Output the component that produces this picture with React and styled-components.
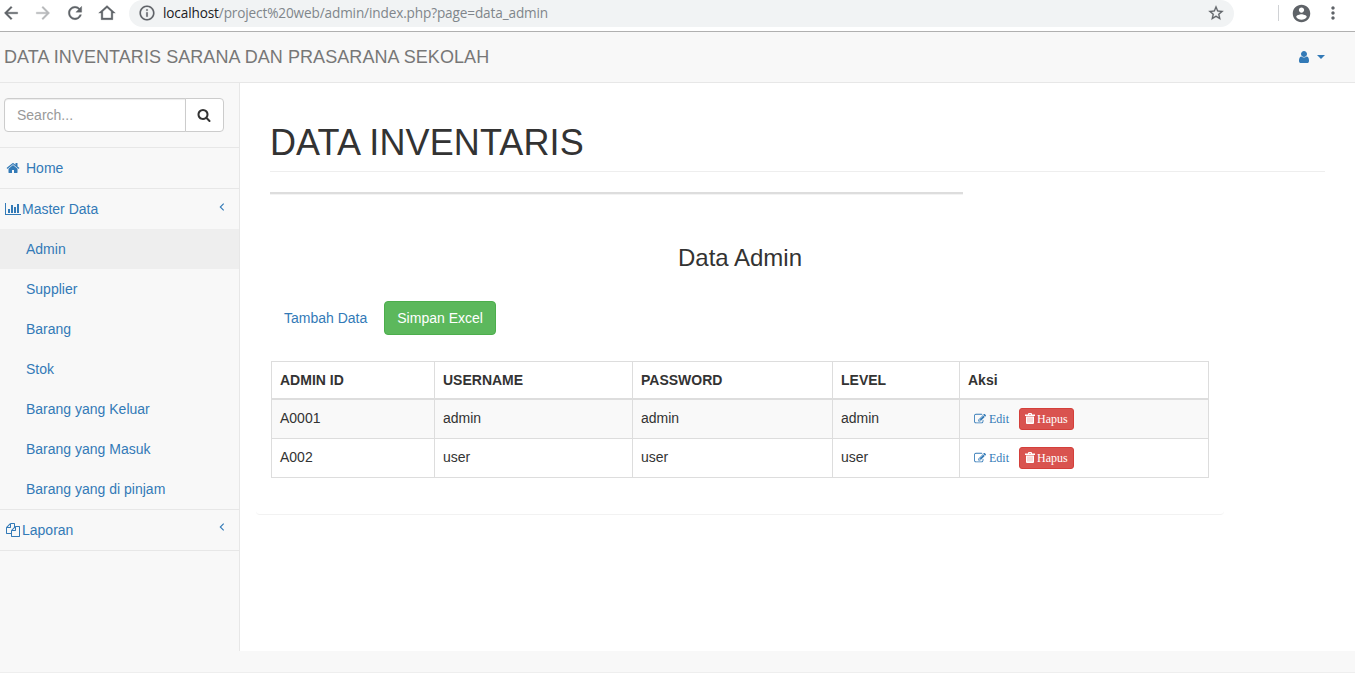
import React from "react";
import styled, { createGlobalStyle } from "styled-components";

const GlobalStyle = createGlobalStyle`
  * { box-sizing: border-box; }
  body {
    margin: 0;
    background: #f8f8f8;
    color: #333;
    font: 14px/20px "Liberation Sans", Arial, sans-serif;
    overflow: hidden;
  }
  a { color: #337ab7; text-decoration: none; }
`;

const Page = styled.div`
  height: 673px;
  display: flex;
  flex-direction: column;
  border-bottom: 1px solid #eee;
`;

/* Browser toolbar */
const Toolbar = styled.div`
  flex: none;
  height: 32px;
  padding-bottom: 4px;
  display: flex;
  background: #fff;
  border-bottom: 1px solid #b0b0b0;
`;
const NavButtons = styled.div`
  width: 129px;
  height: 26px;
  display: flex;
  align-items: center;
  gap: 12px;
  padding-left: 1px;
  color: #5f6368;
`;
const Address = styled.div`
  width: 1105px;
  height: 27px;
  padding: 0 9px 1px;
  display: flex;
  align-items: center;
  border-radius: 14px;
  background: #f1f3f4;
  color: #5f6368;
`;
const Url = styled.span`
  flex: 1;
  margin-left: 7px;
  font: 13.6px/20px "Open Sans", "Noto Sans", sans-serif;
  letter-spacing: -0.13px;
  color: #80868b;
  white-space: nowrap;
`;
const Host = styled.span`
  color: #202124;
`;
const BrowserActions = styled.div`
  flex: 1;
  height: 26px;
  display: flex;
  align-items: center;
  color: #5f6368;
`;
const Divider = styled.span`
  width: 1px;
  height: 16px;
  margin: 0 12px 0 44px;
  background: #d0d2d5;
`;
const MenuButton = styled.span`
  display: flex;
  margin-left: 11px;
`;

/* Application header */
const Header = styled.header`
  flex: none;
  height: 51px;
  padding: 0 30px 1px 4px;
  display: flex;
  align-items: center;
  justify-content: space-between;
  border-bottom: 1px solid #e7e7e7;
`;
const Brand = styled.span`
  font-size: 18px;
  letter-spacing: 0.07px;
  color: #777;
  white-space: nowrap;
`;
const UserMenu = styled.a`
  display: flex;
  align-items: center;
  gap: 5px;
`;
const Caret = styled.span`
  border: 4px solid transparent;
  border-top-color: #337ab7;
  border-bottom: 0;
`;

const Body = styled.div`
  flex: none;
  height: 568px;
  display: flex;
`;

/* Sidebar */
const Sidebar = styled.nav`
  width: 240px;
  border-right: 1px solid #e7e7e7;
`;
const SearchBox = styled.div`
  height: 65px;
  padding: 15px 15px 15px 4px;
  display: flex;
  border-bottom: 1px solid #e7e7e7;
`;
const SearchField = styled.input`
  width: 182px;
  height: 34px;
  padding: 0 12px;
  border: 1px solid #ccc;
  border-radius: 4px 0 0 4px;
  background: #fff;
  box-shadow: inset 0 1px 1px rgba(0, 0, 0, 0.075);
  font: inherit;
  outline: 0;
  &::placeholder { color: #999; opacity: 1; }
`;
const SearchButton = styled.button`
  width: 39px;
  height: 34px;
  margin-left: -1px;
  padding: 0 1px 0 0;
  display: grid;
  place-items: center;
  border: 1px solid #ccc;
  border-radius: 0 4px 4px 0;
  background: #fff;
  color: #333;
`;
const NavItem = styled.a`
  height: 41px;
  padding: 0 14px 1px ${(p) => p.$inset}px;
  display: flex;
  align-items: center;
  gap: ${(p) => p.$gap}px;
  border-bottom: ${(p) => (p.$open ? "0" : "1px solid #e7e7e7")};
  ${(p) => p.$open && "height: 40px; padding-bottom: 0;"}
`;
const NavLabel = styled.span`
  flex: 1;
`;
const ArrowSlot = styled.span`
  display: flex;
  padding-bottom: 5px;
`;
const SubMenu = styled.div`
  border-bottom: 1px solid #e7e7e7;
`;
const SubItem = styled.a`
  display: block;
  height: 40px;
  padding: 10px 0 0 26px;
  background: ${(p) => (p.$active ? "#eee" : "transparent")};
`;

/* Main content */
const Main = styled.main`
  flex: 1;
  padding: 40px 30px 0 16px;
  background: #fff;
`;
const PageTitle = styled.h1`
  height: 49px;
  margin: 0 0 0 14px;
  border-bottom: 1px solid #eee;
  font-size: 36px;
  line-height: 40px;
  letter-spacing: 0.12px;
  font-weight: 400;
`;
const Rule = styled.hr`
  width: 693px;
  height: 3px;
  margin: 20px 0 0 14px;
  border: 0;
  border-top: 2px solid #ddd;
  background: #f3f3f3;
`;
const Panel = styled.section`
  width: 968px;
  height: 320px;
  padding: 50px 15px 0;
  border-radius: 4px;
  border-bottom: 1px solid #f2f2f2;
`;
const SectionTitle = styled.h3`
  margin: 0;
  font-size: 24px;
  line-height: 26px;
  font-weight: 400;
  text-align: center;
`;
const Actions = styled.div`
  display: flex;
  gap: 4px;
  margin: 30px 0 26px;
`;
const Button = styled.a`
  height: 34px;
  padding: 6px 12px;
  border: 1px solid ${(p) => (p.$primary ? "#4cae4c" : "transparent")};
  border-radius: 4px;
  background: ${(p) => (p.$primary ? "#5cb85c" : "transparent")};
  color: ${(p) => (p.$primary ? "#fff" : "#337ab7")};
`;
const Table = styled.table`
  width: 938px;
  table-layout: fixed;
  border-collapse: separate;
  border-spacing: 0;
  border: solid #ddd;
  border-width: 1px 0 0 1px;
`;
const HeadCell = styled.th`
  width: ${(p) => p.$width}px;
  height: 38px;
  padding: 0 8px;
  border: solid #ddd;
  border-width: 0 1px 2px 0;
  text-align: left;
`;
const Row = styled.tr`
  background: ${(p) => (p.$striped ? "#f9f9f9" : "#fff")};
`;
const Cell = styled.td`
  height: 39px;
  padding: 8px 8px 10px;
  border: solid #ddd;
  border-width: 0 1px 1px 0;
`;
const RowActions = styled.div`
  height: 20px;
  display: flex;
  align-items: flex-start;
  gap: 4px;
`;
const SmallButton = styled.a`
  height: 22px;
  padding: 0 5px;
  display: flex;
  align-items: center;
  gap: ${(p) => (p.$danger ? 2 : 3)}px;
  border: 1px solid ${(p) => (p.$danger ? "#d43f3a" : "transparent")};
  border-radius: 3px;
  background: ${(p) => (p.$danger ? "#d9534f" : "transparent")};
  color: ${(p) => (p.$danger ? "#fff" : "#337ab7")};
  font: 12px/18px "Liberation Serif", "Times New Roman", serif;
`;

const Glyph = styled.svg`
  flex: none;
  display: block;
  fill: currentColor;
`;

const PATHS = {
  user: "M1536 1399q0 109-62.5 187t-150.5 78h-854q-88 0-150.5-78t-62.5-187q0-85 8.5-160.5t31.5-152 58.5-131 94-89 134.5-34.5q131 128 313 128t313-128q76 0 134.5 34.5t94 89 58.5 131 31.5 152 8.5 160.5zm-256-887q0 159-112.5 271.5t-271.5 112.5-271.5-112.5-112.5-271.5 112.5-271.5 271.5-112.5 271.5 112.5 112.5 271.5z",
  search: "M1216 832q0-185-131.5-316.5t-316.5-131.5-316.5 131.5-131.5 316.5 131.5 316.5 316.5 131.5 316.5-131.5 131.5-316.5zm512 832q0 52-38 90t-90 38q-54 0-90-38l-343-342q-179 124-399 124-143 0-273.5-55.5t-225-150-150-225-55.5-273.5 55.5-273.5 150-225 225-150 273.5-55.5 273.5 55.5 225 150 150 225 55.5 273.5q0 220-124 399l343 343q37 37 37 90z",
  home: "M1472 992v480q0 26-19 45t-45 19h-384v-384h-256v384h-384q-26 0-45-19t-19-45v-480q0-1 .5-3t.5-3l575-474 575 474q1 2 1 6zm223-69l-62 74q-8 9-21 11h-3q-13 0-21-7l-692-577-692 577q-12 8-24 7-13-2-21-11l-62-74q-8-10-7-23.5t11-21.5l719-599q32-26 76-26t76 26l244 204v-195q0-14 9-23t23-9h192q14 0 23 9t9 23v408l219 182q10 8 11 21.5t-7 23.5z",
  chart: "M640 896v512h-256v-512h256zm384-512v1024h-256v-1024h256zm1024 1152v128h-2048v-1536h128v1408h1920zm-640-896v768h-256v-768h256zm384-384v1152h-256v-1152h256z",
  files: "M1696 384q40 0 68 28t28 68v1216q0 40-28 68t-68 28h-960q-40 0-68-28t-28-68v-288h-544q-40 0-68-28t-28-68v-672q0-40 20-88t48-76l408-408q28-28 76-48t88-20h416q40 0 68 28t28 68v328q68-40 128-40h416zm-544 213l-299 299h299v-299zm-640-384l-299 299h299v-299zm196 647l316-316v-416h-384v416q0 40-28 68t-68 28h-416v640h512v-256q0-40 20-88t48-76zm956 804v-1152h-384v416q0 40-28 68t-68 28h-416v640h896z",
  edit: "M888 1184l116-116-152-152-116 116v56h96v96h56zm440-720q-16-16-33 1l-350 350q-17 17-1 33t33-1l350-350q17-17 1-33zm80 594v190q0 119-84.5 203.5t-203.5 84.5h-832q-119 0-203.5-84.5t-84.5-203.5v-832q0-119 84.5-203.5t203.5-84.5h832q63 0 117 25 15 7 18 23 3 17-9 29l-49 49q-14 14-32 8-23-6-45-6h-832q-66 0-113 47t-47 113v832q0 66 47 113t113 47h832q66 0 113-47t47-113v-126q0-13 9-22l64-64q15-15 35-7t20 29zm-96-738l288 288-672 672h-288v-288zm444 132l-92 92-288-288 92-92q28-28 68-28t68 28l152 152q28 28 28 68t-28 68z",
};

const Icon = ({ name, width = 14, height = 14, box = "0 0 1792 1792" }) => (
  <Glyph width={width} height={height} viewBox={box}>
    <path d={PATHS[name]} />
  </Glyph>
);

const TrashIcon = () => (
  <Glyph width="10" height="12" viewBox="0 0 10 12">
    <path d="M0 1.6h3V1q0-1 1-1h2q1 0 1 1v.6h3V3H0zM4 1v.6h2V1zM1 3.5h8V10q0 1-1 1H2q-1 0-1-1z" />
    <path d="M3 4.5v5M5 4.5v5M7 4.5v5" stroke="#d9534f" strokeWidth="0.7" opacity="0.6" />
  </Glyph>
);

const BROWSER = {
  back: "M20 11H7.83l5.59-5.59L12 4l-8 8 8 8 1.41-1.41L7.83 13H20v-2z",
  forward: "M12 4l-1.41 1.41L16.17 11H4v2h12.17l-5.58 5.59L12 20l8-8z",
  reload: "M17.65 6.35C16.2 4.9 14.21 4 12 4c-4.42 0-7.99 3.58-7.99 8s3.57 8 7.99 8c3.73 0 6.84-2.55 7.73-6h-2.08c-.82 2.33-3.04 4-5.65 4-3.31 0-6-2.69-6-6s2.69-6 6-6c1.66 0 3.14.69 4.22 1.78L13 11h7V4l-2.35 2.35z",
  home: "M12 5.69l5 4.5V18H7v-7.81l5-4.5M12 3L2 12h3v8h14v-8h3L12 3z",
  info: "M11 7h2v2h-2zm0 4h2v6h-2zm1-9C6.48 2 2 6.48 2 12s4.48 10 10 10 10-4.48 10-10S17.52 2 12 2zm0 18c-4.41 0-8-3.59-8-8s3.59-8 8-8 8 3.59 8 8-3.59 8-8 8z",
  star: "M22 9.24l-7.19-.62L12 2 9.19 8.63 2 9.24l5.46 4.73L5.82 21 12 17.27 18.18 21l-1.63-7.03L22 9.24zM12 15.4l-3.76 2.27 1-4.28-3.32-2.88 4.38-.38L12 6.1l1.71 4.04 4.38.38-3.32 2.88 1 4.28L12 15.4z",
  account: "M12 2C6.48 2 2 6.48 2 12s4.48 10 10 10 10-4.48 10-10S17.52 2 12 2zm0 3c1.66 0 3 1.34 3 3s-1.34 3-3 3-3-1.34-3-3 1.34-3 3-3zm0 14.2c-2.5 0-4.71-1.28-6-3.22.03-1.99 4-3.08 6-3.08 1.99 0 5.97 1.09 6 3.08-1.29 1.94-3.5 3.22-6 3.22z",
  more: "M12 8c1.1 0 2-.9 2-2s-.9-2-2-2-2 .9-2 2 .9 2 2 2zm0 2c-1.1 0-2 .9-2 2s.9 2 2 2 2-.9 2-2-.9-2-2-2zm0 6c-1.1 0-2 .9-2 2s.9 2 2 2 2-.9 2-2-.9-2-2-2z",
};

const BrowserIcon = ({ name, size = 20, opacity = 1, weight = 0.4 }) => (
  <Glyph width={size} height={size} viewBox="0 0 24 24" opacity={opacity}>
    <path d={BROWSER[name]} stroke="currentColor" strokeWidth={weight} />
  </Glyph>
);

const Arrow = () => (
  <ArrowSlot>
    <svg width="6" height="8" viewBox="0 0 6 8" fill="none" stroke="#337ab7" strokeWidth="1.1">
      <path d="M4.7 0.7 1.3 4l3.4 3.3" />
    </svg>
  </ArrowSlot>
);

const masterItems = ["Admin", "Supplier", "Barang", "Stok", "Barang yang Keluar", "Barang yang Masuk", "Barang yang di pinjam"];
const columns = [
  ["ADMIN ID", 163],
  ["USERNAME", 198],
  ["PASSWORD", 200],
  ["LEVEL", 127],
  ["Aksi", 249],
];
const rows = [
  ["A0001", "admin", "admin", "admin"],
  ["A002", "user", "user", "user"],
];

export default function App() {
  return (
    <>
      <GlobalStyle />
      <Page>
        <Toolbar>
          <NavButtons>
            <BrowserIcon name="back" />
            <BrowserIcon name="forward" opacity={0.45} />
            <BrowserIcon name="reload" />
            <BrowserIcon name="home" />
          </NavButtons>
          <Address>
            <BrowserIcon name="info" size={18} weight={0.2} />
            <Url><Host>localhost</Host>/project%20web/admin/index.php?page=data_admin</Url>
            <BrowserIcon name="star" size={18} weight={0.3} />
          </Address>
          <BrowserActions>
            <Divider />
            <BrowserIcon name="account" size={21} weight={0} />
            <MenuButton><BrowserIcon name="more" weight={0} /></MenuButton>
          </BrowserActions>
        </Toolbar>

        <Header>
          <Brand>DATA INVENTARIS SARANA DAN PRASARANA SEKOLAH</Brand>
          <UserMenu href="#">
            <Icon name="user" width={16} height={14} box="-128 0 2048 1792" />
            <Caret />
          </UserMenu>
        </Header>

        <Body>
          <Sidebar>
            <SearchBox>
              <SearchField placeholder="Search..." />
              <SearchButton><Icon name="search" /></SearchButton>
            </SearchBox>
            <NavItem href="#" $inset={6} $gap={6}>
              <Icon name="home" />
              <NavLabel>Home</NavLabel>
            </NavItem>
            <NavItem href="#" $inset={5} $gap={1} $open>
              <Icon name="chart" width={16} box="0 0 2048 1792" />
              <NavLabel>Master Data</NavLabel>
              <Arrow />
            </NavItem>
            <SubMenu>
              {masterItems.map((item, i) => (
                <SubItem href="#" key={item} $active={i === 0}>{item}</SubItem>
              ))}
            </SubMenu>
            <NavItem href="#" $inset={6} $gap={2}>
              <Icon name="files" />
              <NavLabel>Laporan</NavLabel>
              <Arrow />
            </NavItem>
          </Sidebar>

          <Main>
            <PageTitle>DATA INVENTARIS</PageTitle>
            <Rule />
            <Panel>
              <SectionTitle>Data Admin</SectionTitle>
              <Actions>
                <Button href="#">Tambah Data</Button>
                <Button href="#" $primary>Simpan Excel</Button>
              </Actions>
              <Table>
                <thead>
                  <tr>
                    {columns.map(([label, width]) => (
                      <HeadCell key={label} $width={width}>{label}</HeadCell>
                    ))}
                  </tr>
                </thead>
                <tbody>
                  {rows.map((row, i) => (
                    <Row key={row[0]} $striped={i === 0}>
                      {row.map((value, j) => (
                        <Cell key={j}>{value}</Cell>
                      ))}
                      <Cell>
                        <RowActions>
                          <SmallButton href="#"><Icon name="edit" width={12} height={12} />Edit</SmallButton>
                          <SmallButton href="#" $danger><TrashIcon />Hapus</SmallButton>
                        </RowActions>
                      </Cell>
                    </Row>
                  ))}
                </tbody>
              </Table>
            </Panel>
          </Main>
        </Body>
      </Page>
    </>
  );
}
